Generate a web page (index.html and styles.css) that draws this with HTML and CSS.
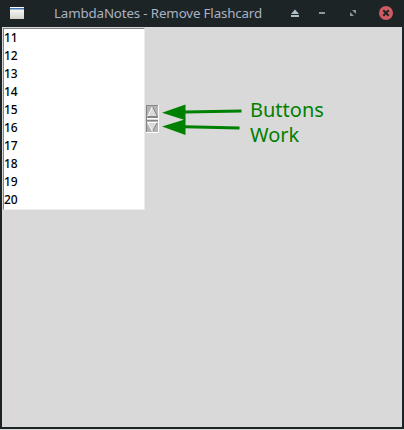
FILE: index.html
```html
<!DOCTYPE html>
<html lang="en">
<head>
<meta charset="utf-8">
<title>LambdaNotes - Remove Flashcard</title>
<link rel="stylesheet" href="styles.css">
</head>
<body>
<div class="window">
  <header class="titlebar">
    <svg class="app-icon" width="16" height="13" viewBox="0 0 16 13">
      <defs><linearGradient id="paper" x1="0" y1="0" x2="0" y2="1"><stop offset="0" stop-color="#fff"/><stop offset="1" stop-color="#d3d3cc"/></linearGradient></defs>
      <rect x="1" y="0" width="14" height="12" fill="url(#paper)"/>
      <rect x="1" y="1" width="14" height="1.5" fill="#4478b5"/>
    </svg>
    <h1 class="title">LambdaNotes - Remove Flashcard</h1>
    <svg class="controls" width="106" height="14" viewBox="0 0 106 14">
      <path d="M5 2.5 9 7H1zM1 8h8v2H1z" fill="#aebfc5"/>
      <path d="M29 5h6v2h-6z" fill="#8b979b"/>
      <path d="M62 3h4v4zM60 5v4h4z" fill="#8b979b"/>
      <circle cx="96" cy="6" r="7" fill="#cf5a61"/>
      <path d="m93.3 3.3 5.4 5.4m0-5.4-5.4 5.4" stroke="#1d2426" stroke-width="2"/>
    </svg>
  </header>
  <main class="content">
    <ul class="list">
      <li>11</li><li>12</li><li>13</li><li>14</li><li>15</li>
      <li>16</li><li>17</li><li>18</li><li>19</li><li>20</li>
    </ul>
    <svg class="scrollbar" width="13" height="28" viewBox="0 0 13 28">
      <path d="M0 0h13v28H0z" fill="#b3b3b3"/>
      <path d="M.5 28V.5H13" fill="none" stroke="#858585"/>
      <path d="M12.5 0v27.5H0" fill="none" stroke="#fff"/>
      <path d="M6.5 1.5 11.5 12h-10z" fill="#d9d9d9"/>
      <path d="M1.5 12 6.5 1.5" stroke="#fff"/>
      <path d="M6.5 1.5 11.5 11.5h-10" fill="none" stroke="#868686"/>
      <path d="M1 12h11v4H1z" fill="#d9d9d9"/>
      <path d="M1 13.5h11" stroke="#fff"/>
      <path d="M1 12.5h11M1 15.5h11" stroke="#858585"/>
      <path d="M1.5 17h10l-5 9.5z" fill="#d9d9d9"/>
      <path d="M11.5 17l-5 9.5" stroke="#868686"/>
      <path d="M11.5 17.5h-10l5 9" fill="none" stroke="#fff"/>
    </svg>
    <svg class="arrows" width="81" height="32" viewBox="0 0 81 32">
      <g fill="#008000" stroke="#008000" stroke-width="3">
        <path d="M23 9.1 79.5 7.9M23 23.7 77.5 25"/>
        <path d="M0 9.7 23.5 1.5v15.7zM0 23.6l23.5-7.4V32z" stroke="none"/>
      </g>
    </svg>
    <p class="note">Buttons<br>Work</p>
  </main>
</div>
</body>
</html>
```

FILE: styles.css
```css
* { box-sizing: border-box; }
body {
  margin: 0;
  background: #d9d9d9;
  overflow: hidden;
}
.window {
  width: 404px;
  height: 429px;
  display: flex;
  flex-direction: column;
  background: #1d2426;
  padding: 0 2px 2px;
}
.titlebar {
  height: 27px;
  flex: none;
  display: flex;
  align-items: flex-start;
}
.app-icon { margin: 7px 0 0 7px; }
.title {
  margin: 3px 0 0 29px;
  width: 236px;
  font: 400 13.33px/20px "Noto Sans", sans-serif;
  letter-spacing: -0.15px;
  color: #a9b2c3;
  white-space: nowrap;
}
.controls { margin-top: 7px; overflow: visible; }
.content {
  flex: 1;
  display: flex;
  align-items: flex-start;
  background: #d9d9d9;
}
.list {
  margin: 1px 0 0 1px;
  padding: 0;
  list-style: none;
  width: 142px;
  height: 182px;
  background: #fff;
  border: 1px solid;
  border-color: #828282 #ececec #ececec #828282;
  font: 500 12px/18px "Noto Sans", sans-serif;
  color: #000;
}
.list li { height: 18px; }
.scrollbar { margin: 78px 0 0 1px; }
.arrows { margin: 76px 0 0 3px; }
.note {
  margin: 70px 0 0 7px;
  font: 400 20px/25px "Noto Sans", sans-serif;
  color: #008000;
}
```
